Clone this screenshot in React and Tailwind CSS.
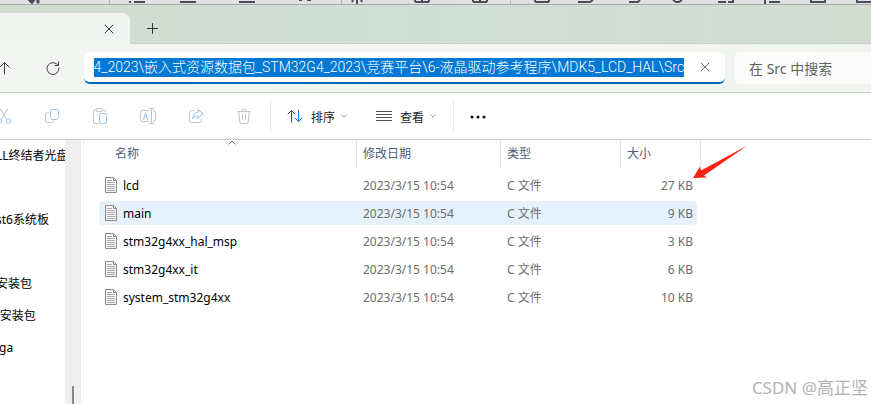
import React, { useEffect, useRef } from 'react';

const ADDRESS = 'G4_2023\\嵌入式资源数据包_STM32G4_2023\\竞赛平台\\6-液晶驱动参考程序\\MDK5_LCD_HAL\\Src';

const files = [
  { name: 'lcd', date: '2023/3/15 10:54', type: 'C 文件', size: '27 KB' },
  { name: 'main', date: '2023/3/15 10:54', type: 'C 文件', size: '9 KB', active: true },
  { name: 'stm32g4xx_hal_msp', date: '2023/3/15 10:54', type: 'C 文件', size: '3 KB' },
  { name: 'stm32g4xx_it', date: '2023/3/15 10:54', type: 'C 文件', size: '6 KB' },
  { name: 'system_stm32g4xx', date: '2023/3/15 10:54', type: 'C 文件', size: '10 KB' },
];

// empty strings are blank rows of the tree
const folders = ['LL终结者光盘', '', 'st6系统板', '', '安装包', '-安装包', 'iga'];

function Icon({ children, size = 16, className = '' }) {
  return (
    <svg
      width={size}
      height={size}
      viewBox={`0 0 ${size} ${size}`}
      fill="none"
      stroke="currentColor"
      strokeLinecap="round"
      strokeLinejoin="round"
      className={`shrink-0 ${className}`}
      aria-hidden="true"
    >
      {children}
    </svg>
  );
}

const CloseIcon = () => (
  <Icon size={10}>
    <path d="M1 1l8 8M9 1l-8 8" />
  </Icon>
);

const Chevron = () => (
  <svg width="6" height="4" viewBox="0 0 6 4" fill="none" stroke="#a0a0a0" aria-hidden="true">
    <path d="M0.5 0.5L3 3l2.5-2.5" />
  </svg>
);

const tools = [
  {
    label: '剪切',
    icon: (
      <>
        <path d="M4.5 1l6 10.5M11.5 1l-6 10.5" />
        <g stroke="#9cc8ee">
          <circle cx="3.5" cy="13" r="2.4" />
          <circle cx="12.5" cy="13" r="2.4" />
        </g>
      </>
    ),
  },
  {
    label: '复制',
    icon: (
      <>
        <path d="M4.5 4.5h-1a2 2 0 0 0-2 2v6a2 2 0 0 0 2 2h4a2 2 0 0 0 2-1.5" />
        <rect x="6.5" y="1.5" width="8" height="10" rx="2" stroke="#9cc8ee" />
      </>
    ),
  },
  {
    label: '粘贴',
    icon: (
      <>
        <path d="M6 15.5H3A1.5 1.5 0 0 1 1.5 14V3.5A1.5 1.5 0 0 1 3 2h1.5M10.5 2H12A1.5 1.5 0 0 1 13.5 3.5" />
        <rect x="4.5" y="0.5" width="6" height="3" rx="1" />
        <rect x="7.5" y="5.5" width="7" height="10" rx="1.5" stroke="#9cc8ee" />
      </>
    ),
  },
  {
    label: '重命名',
    icon: (
      <>
        <path d="M8.5 2.5h-6a2 2 0 0 0-2 2v7a2 2 0 0 0 2 2h6M13.5 2.5a2 2 0 0 1 2 2v7a2 2 0 0 1-2 2" />
        <path d="M11.5 0.5v15M9.5 0.5h4M9.5 15.5h4" stroke="#9cc8ee" />
        <text x="2.5" y="11.5" fontSize="9" fill="#7db5e6" stroke="none">A</text>
      </>
    ),
  },
  {
    label: '共享',
    icon: (
      <>
        <path d="M6 2.5H3.5a2 2 0 0 0-2 2v8a2 2 0 0 0 2 2h8a2 2 0 0 0 2-2V11" />
        <path d="M10 1.5L15.2 6 10 10.5V8C7.5 8 6 8.8 4.5 10.8 5 7 7 4.5 10 4z" stroke="#8fbfe9" />
      </>
    ),
  },
  {
    label: '删除',
    icon: (
      <path d="M1.5 3.5h13M5.5 3.5a2.5 2.5 0 0 1 5 0M2.8 3.5l1 10.5a1.5 1.5 0 0 0 1.5 1.5h5.4a1.5 1.5 0 0 0 1.5-1.5l1-10.5M6.5 6.5v5M9.5 6.5v5" />
    ),
  },
];

// lower edge of the editor toolbar that sits behind the window
function EditorEdge() {
  return (
    <div className="h-[5px] overflow-hidden border-b border-[#a9aaa9] bg-[#e1e1e1]">
      <svg width="871" height="4" viewBox="0 0 871 4" fill="none" stroke="#4b4e5f" strokeWidth="2" aria-hidden="true">
        <path d="M28 0h7l-3 4zM37 0v3h2V0" fill="#4b4e5f" strokeWidth="1" />
        <path d="M129 2h2M134 2h11M180 2h16M239 2h16M299 0h3M307 0h4" />
        <path d="M353 0l-1 2M357 0v4M361 0l1 2" />
        <path d="M415 0v1l1 1h12l1-1V0M422 0v2M473 0v1l1 1h12l1-1V0M480 0v2M535 0v1l1 1h12l1-1V0" />
        <path d="M578 2h12l3-2M629 2h9l2-2M673 0l3 2h3l3-2" />
        <path d="M718 2h8M728 2h5V0M765 0v4M769 2h11M811 0v2h14V0M857 0v2h14" />
        <path d="M109.5 0v4M341.5 0v4M510.5 0v4" stroke="#b5b5b5" strokeWidth="1" />
      </svg>
    </div>
  );
}

function TabStrip() {
  return (
    <div className="flex h-[39px] items-end bg-linear-to-r from-[#d0ddd1] via-[#cfdfd7] to-[#d4dcd3]">
      <div className="flex h-[31px] w-[130px] items-center justify-end rounded-tr-lg bg-[#f1f5f1] pr-4">
        <button type="button" aria-label="关闭选项卡" className="text-[#333]">
          <CloseIcon />
        </button>
      </div>
      <div className="flex h-[31px] flex-1 items-center rounded-bl border-b border-[#c6d3c7] pl-4">
        <button type="button" aria-label="新建选项卡" className="text-[#333]">
          <Icon size={13}>
            <path d="M6.5 1.5v10M1.5 6.5h10" />
          </Icon>
        </button>
      </div>
    </div>
  );
}

function AddressRow() {
  const ref = useRef(null);

  // keep the end of the path in view
  useEffect(() => {
    ref.current.scrollLeft = ref.current.scrollWidth;
  }, []);

  return (
    <div className="flex h-[49px] items-center border-b border-[#c2cfc2] bg-linear-to-r from-[#f2f5f2] to-[#f0f4ee]">
      <div className="-ml-5 flex shrink-0 text-[#404040]">
        <button type="button" aria-label="上移" className="flex w-12 justify-center">
          <Icon>
            <path d="M8.5 14V2.5M3.5 7.5l5-5 5 5" />
          </Icon>
        </button>
        <button type="button" aria-label="刷新" className="flex w-12 justify-center">
          <Icon>
            <path d="M14 5.2A6 6 0 1 0 15 8M14.5 2v3.5H11" />
          </Icon>
        </button>
      </div>
      <div className="ml-2 flex h-8 min-w-0 flex-1 items-center rounded-md border-b-2 border-[#0067c0] bg-white pl-2.5">
        <input
          ref={ref}
          type="text"
          aria-label="地址"
          defaultValue={ADDRESS}
          className="h-[19px] min-w-0 flex-1 bg-[#0078d4] font-['Roboto','Noto_Sans_CJK_SC',sans-serif] text-sm leading-[19px] font-light text-white outline-none"
        />
        <button type="button" aria-label="清除" className="flex w-[41px] justify-center text-[#707070]">
          <CloseIcon />
        </button>
      </div>
      <input
        type="search"
        aria-label="搜索"
        placeholder="在 Src 中搜索"
        className="ml-[9px] h-8 w-[137px] shrink-0 rounded-l-md bg-[#fbfcfb] pl-[15px] text-sm text-[#606060] outline-none placeholder:text-[#606060]"
      />
    </div>
  );
}

function Toolbar() {
  return (
    <div className="flex h-[47px] items-center border-b border-[#c5cdc5] bg-white">
      <div className="-ml-5 flex shrink-0 text-[#c3c3c3]">
        {tools.map((tool) => (
          <button key={tool.label} type="button" aria-label={tool.label} className="flex w-12 justify-center">
            <Icon>{tool.icon}</Icon>
          </button>
        ))}
      </div>
      <div className="ml-0.5 h-8 w-px bg-[#e9e9e9]" />
      <button type="button" className="ml-4 flex shrink-0 items-center text-xs text-[#1b1b1b]">
        <Icon className="mr-2">
          <path d="M4.5 14V2.5M1 6l3.5-3.5L8 6" stroke="#505050" />
          <path d="M11.5 2v11.5M8 10l3.5 3.5L15 10" stroke="#0f7ad6" />
        </Icon>
        <span className="pt-1">排序</span>
        <span className="ml-1.5"><Chevron /></span>
      </button>
      <button type="button" className="ml-[29px] flex shrink-0 items-center text-xs text-[#1b1b1b]">
        <Icon className="mr-2 text-[#505050]">
          <path d="M0.5 3.5h15M0.5 6.5h15M0.5 9.5h15M0.5 12.5h15" />
        </Icon>
        <span className="pt-1">查看</span>
        <span className="ml-1.5"><Chevron /></span>
      </button>
      <div className="ml-[17px] h-8 w-px bg-[#e9e9e9]" />
      <button type="button" aria-label="更多" className="ml-4">
        <Icon>
          <g fill="#1b1b1b" stroke="none">
            <circle cx="2" cy="9" r="1.6" />
            <circle cx="8" cy="9" r="1.6" />
            <circle cx="14" cy="9" r="1.6" />
          </g>
        </Icon>
      </button>
    </div>
  );
}

function FolderTree() {
  return (
    <nav className="flex shrink-0">
      <ul className="w-[65px] overflow-hidden text-xs whitespace-nowrap text-black">
        {folders.map((folder, i) => (
          <li key={i} className="-ml-1 flex h-8 items-center">{folder}</li>
        ))}
      </ul>
      <div className="flex w-4 items-end justify-center bg-[#efefef]">
        <div className="h-[18px] w-0.5 bg-[#858585]" />
      </div>
    </nav>
  );
}

const FileIcon = () => (
  <svg width="12" height="16" viewBox="0 0 12 16" fill="none" stroke="#8a8a8a" className="shrink-0" aria-hidden="true">
    <path d="M0.5 0.5h8l3 3v12h-11z" fill="#fafafa" />
    <path d="M8.5 0.5v3h3" />
    <path d="M2 3.5h5M2 5.5h8M2 7.5h8M2 9.5h8M2 11.5h8M2 13.5h8" stroke="#a9a9a9" />
  </svg>
);

const headCell = 'flex h-[27px] items-center border-r border-[#e3e3e3] font-normal';

function FileTable() {
  return (
    <table className="w-[602px] table-fixed border-collapse text-left text-xs">
      <thead className="text-[#4c607a]">
        <tr className="h-[31px] align-top">
          <th className="relative w-[258px] p-0">
            <div className={`${headCell} pl-4`}>名称</div>
            <svg width="8" height="5" viewBox="0 0 8 5" fill="none" stroke="#666" className="absolute top-0 left-[129px]" aria-hidden="true">
              <path d="M0.5 4.5L4 1l3.5 3.5" />
            </svg>
          </th>
          <th className="w-36 p-0"><div className={`${headCell} pl-1.5`}>修改日期</div></th>
          <th className="w-[120px] p-0"><div className={`${headCell} pl-1.5`}>类型</div></th>
          <th className="w-20 p-0"><div className={`${headCell} pl-1.5`}>大小</div></th>
        </tr>
      </thead>
      <tbody className="text-[#6d6d6d]">
        {files.map((file) => {
          const bg = file.active ? 'bg-[#e5f2fd]' : '';
          return (
            <tr key={file.name}>
              <td className="px-0 py-0.5">
                <div className={`flex h-6 items-center gap-1.5 rounded-l-sm pl-1.5 text-black ${bg}`}>
                  <FileIcon />
                  <span className="pt-0.5">{file.name}</span>
                </div>
              </td>
              <td className="px-0 py-0.5"><div className={`h-6 pl-1.5 leading-[26px] ${bg}`}>{file.date}</div></td>
              <td className="px-0 py-0.5"><div className={`h-6 pl-1.5 leading-[26px] ${bg}`}>{file.type}</div></td>
              <td className="py-0.5 pr-1 pl-0">
                <div className={`h-6 rounded-r-sm pr-1 text-right leading-[26px] ${bg}`}>{file.size}</div>
              </td>
            </tr>
          );
        })}
      </tbody>
    </table>
  );
}

export default function App() {
  return (
    <div className="flex min-h-screen flex-col overflow-hidden bg-white font-['Noto_Sans','Noto_Sans_CJK_SC',sans-serif]">
      <EditorEdge />
      <TabStrip />
      <AddressRow />
      <Toolbar />
      <div className="relative flex flex-1">
        <FolderTree />
        <main className="ml-0.5 min-w-0 flex-1 border-l border-[#f3f3f3] pl-[15px]">
          <div className="relative w-fit">
            <FileTable />
            <svg width="56" height="34" viewBox="0 0 56 34" className="absolute top-[5px] left-[593px]" aria-hidden="true">
              <path d="M1 33l7-11.5 1 4L55.5 0.5 12 30.5l3 2z" fill="#fb2312" />
            </svg>
          </div>
        </main>
        <p className="absolute right-[3px] bottom-1 text-[17px] leading-6 text-[#b2b2b2]">CSDN @高正坚</p>
      </div>
    </div>
  );
}
